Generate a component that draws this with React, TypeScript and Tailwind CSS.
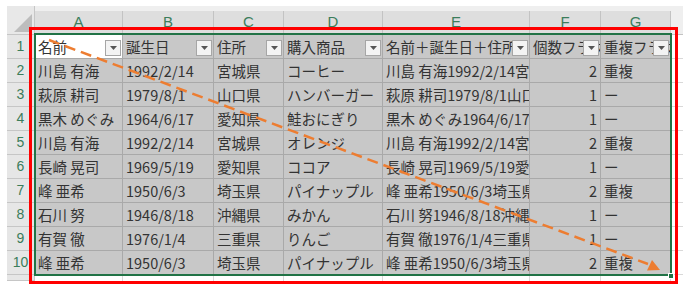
import React from 'react';

type Col = { key: string; width: number; align?: 'right' };

const columns: Col[] = [
    { key: 'A', width: 88 },
    { key: 'B', width: 91 },
    { key: 'C', width: 70 },
    { key: 'D', width: 99 },
    { key: 'E', width: 147 },
    { key: 'F', width: 71, align: 'right' },
    { key: 'G', width: 70 },
];

const header = ['名前', '誕生日', '住所', '購入商品', '名前＋誕生日＋住所', '個数フラグ', '重複フラグ'];

const rows: string[][] = [
    ['川島 有海', '1992/2/14', '宮城県', 'コーヒー', '川島 有海1992/2/14宮城県', '2', '重複'],
    ['萩原 耕司', '1979/8/1', '山口県', 'ハンバーガー', '萩原 耕司1979/8/1山口県', '1', 'ー'],
    ['黒木 めぐみ', '1964/6/17', '愛知県', '鮭おにぎり', '黒木 めぐみ1964/6/17愛知県', '1', 'ー'],
    ['川島 有海', '1992/2/14', '宮城県', 'オレンジ', '川島 有海1992/2/14宮城県', '2', '重複'],
    ['長崎 晃司', '1969/5/19', '愛知県', 'ココア', '長崎 晃司1969/5/19愛知県', '1', 'ー'],
    ['峰 亜希', '1950/6/3', '埼玉県', 'パイナップル', '峰 亜希1950/6/3埼玉県', '2', '重複'],
    ['石川 努', '1946/8/18', '沖縄県', 'みかん', '石川 努1946/8/18沖縄県', '1', 'ー'],
    ['有賀 徹', '1976/1/4', '三重県', 'りんご', '有賀 徹1976/1/4三重県', '1', 'ー'],
    ['峰 亜希', '1950/6/3', '埼玉県', 'パイナップル', '峰 亜希1950/6/3埼玉県', '2', '重複'],
];

const FilterButton: React.FC = () => (
    <div className="absolute right-[1px] bottom-[2px] w-4 h-4 border border-[#a6a6a6] bg-[#f3f3f3] flex items-center justify-center">
        <svg width="7" height="4" viewBox="0 0 7 4">
            <path d="M0 0h7L3.5 4z" fill="#555" />
        </svg>
    </div>
);

const RowHeader: React.FC<{ label: string; h?: string }> = ({ label, h = 'h-6' }) => (
    <div className={`w-[28px] ${h} shrink-0 bg-[#e6e6e6] border-r border-b border-[#c6c6c6] flex items-center justify-center text-[14px] text-[#3b7d5b] font-['Liberation_Sans',sans-serif] overflow-hidden`}>
        {label}
    </div>
);

export default function App() {
    return (
        <div className="relative w-[687px] h-[297px] bg-white overflow-hidden font-['Noto_Sans_CJK_JP',sans-serif] text-[#333]">
            <div className="pt-[6px] pl-[7px]">
                {/* Column headers */}
                <div className="flex h-[29px]">
                    <div className="w-[28px] shrink-0 bg-[#e8e8e8] border-r border-b border-[#c6c6c6] flex items-end justify-end pr-[2px] pb-[2px]">
                        <svg width="18" height="18" viewBox="0 0 18 18">
                            <path d="M18 0V18H0z" fill="#bdbdbd" />
                        </svg>
                    </div>
                    <div className="flex flex-col">
                        <div className="h-[5px] w-[648px] bg-[#efefef]" />
                        <div className="flex h-6">
                            {columns.map((c) => (
                                <div
                                    key={c.key}
                                    style={{ width: c.width }}
                                    className="shrink-0 bg-[#dedede] border-r border-b border-[#c3c3c3] flex items-center justify-center text-[15px] text-[#3b7d5b] font-['Liberation_Sans',sans-serif]"
                                >
                                    {c.key}
                                </div>
                            ))}
                            <div className="w-[12px] shrink-0 bg-[#efefef] border-b border-[#c3c3c3]" />
                        </div>
                    </div>
                </div>

                {/* Row 1: table header with filter buttons */}
                <div className="flex">
                    <RowHeader label="1" />
                    {header.map((text, i) => (
                        <div
                            key={i}
                            style={{ width: columns[i].width }}
                            className={`relative shrink-0 h-6 border-r border-b border-[#a9a9a9] ${i === 0 ? 'bg-white' : 'bg-[#c8c8c8]'} pl-[3px] flex items-center text-[14.5px] whitespace-nowrap overflow-hidden`}
                        >
                            {text}
                            <FilterButton />
                        </div>
                    ))}
                    <div className="w-[12px] h-6 shrink-0 border-b border-[#d9d9d9]" />
                </div>

                {/* Data rows */}
                {rows.map((row, r) => (
                    <div key={r} className="flex">
                        <RowHeader label={String(r + 2)} />
                        {row.map((text, i) => (
                            <div
                                key={i}
                                style={{ width: columns[i].width }}
                                className={`shrink-0 h-6 border-r border-b border-[#a9a9a9] bg-[#c8c8c8] flex items-center text-[14.5px] whitespace-nowrap overflow-hidden ${columns[i].align === 'right' ? 'justify-end pr-[3px]' : 'pl-[3px]'}`}
                            >
                                {text}
                            </div>
                        ))}
                        <div className="w-[12px] h-6 shrink-0 border-b border-[#d9d9d9]" />
                    </div>
                ))}

                {/* Partial next row */}
                <div className="flex">
                    <RowHeader label="" h="h-[6px]" />
                    {columns.map((c) => (
                        <div key={c.key} style={{ width: c.width }} className="shrink-0 h-[6px] border-r border-[#d9d9d9]" />
                    ))}
                </div>
            </div>

            {/* Selection range */}
            <div className="absolute left-[34px] top-[33px] w-[638px] h-[243px] border-2 border-[#217346]" />
            <div className="absolute left-[668px] top-[273px] w-[6px] h-[6px] bg-[#217346] border border-white" />

            {/* Red annotation frame */}
            <div className="absolute left-[29px] top-[27px] w-[649px] h-[257px] border-[3px] border-[#ff0000]" />

            {/* Dashed arrow across the range */}
            <svg className="absolute inset-0 pointer-events-none" width="687" height="297" viewBox="0 0 687 297">
                <line x1="49" y1="40" x2="648" y2="264" stroke="#ed7d31" strokeWidth="2.5" strokeDasharray="11 6" />
                <path d="M660 270L647 270.5L652 260z" fill="#ed7d31" />
            </svg>
        </div>
    );
}
